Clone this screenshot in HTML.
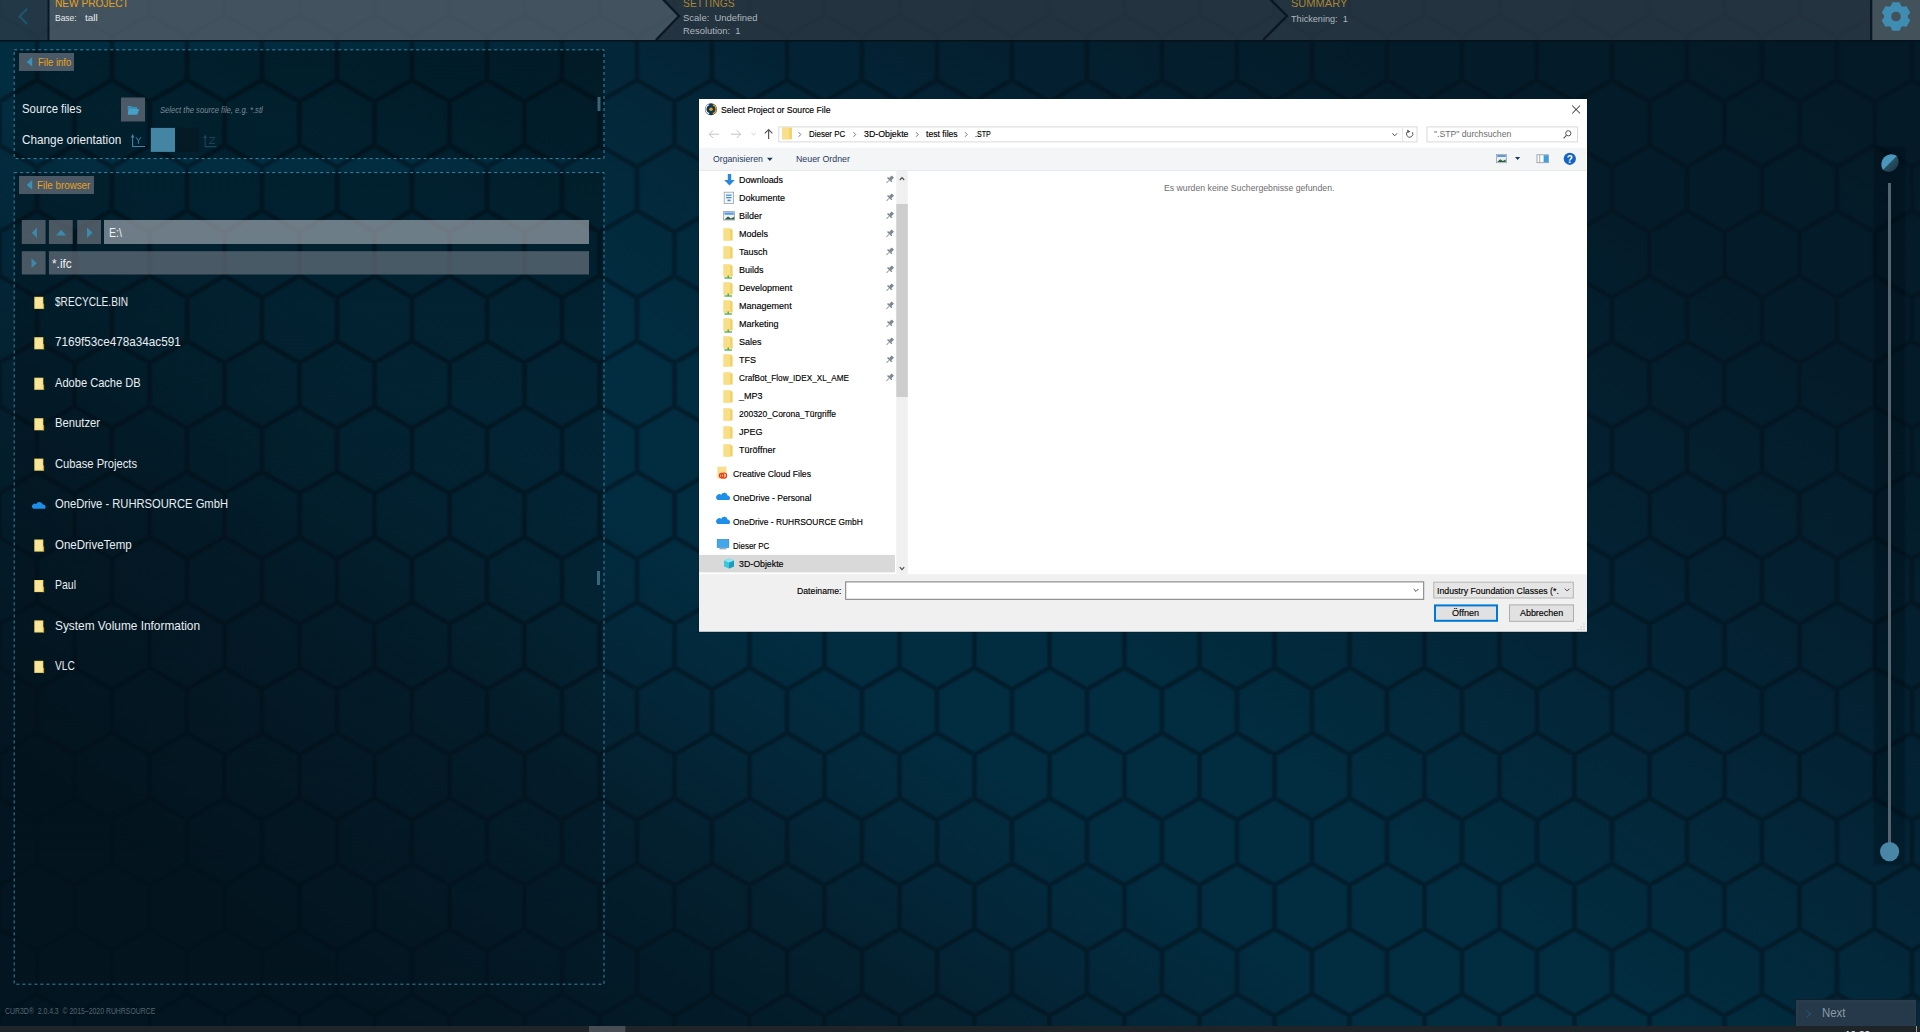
<!DOCTYPE html>
<html><head><meta charset="utf-8"><title>CUR3D</title>
<style>
html,body{margin:0;padding:0;width:1920px;height:1032px;overflow:hidden;background:#03202f;font-family:"Liberation Sans",sans-serif;}
.a{position:absolute;}
.t{position:absolute;white-space:pre;line-height:1.1172;transform-origin:0 0;}
svg{position:absolute;left:0;top:0;}
</style></head><body>
<svg width="1920" height="1032" viewBox="0 0 1920 1032">
<defs>
<linearGradient id="bgg" gradientUnits="userSpaceOnUse" x1="682.5" y1="1219.4" x2="1581.4" y2="-104.6">
<stop offset="0.0000" stop-color="rgb(3,21,32)"/>
<stop offset="0.0940" stop-color="rgb(3,26,39)"/>
<stop offset="0.1875" stop-color="rgb(4,31,46)"/>
<stop offset="0.2687" stop-color="rgb(3,39,57)"/>
<stop offset="0.3438" stop-color="rgb(2,44,64)"/>
<stop offset="0.4188" stop-color="rgb(2,45,65)"/>
<stop offset="0.4938" stop-color="rgb(2,42,61)"/>
<stop offset="0.5687" stop-color="rgb(3,39,57)"/>
<stop offset="0.6562" stop-color="rgb(3,34,51)"/>
<stop offset="0.7375" stop-color="rgb(4,31,47)"/>
<stop offset="0.8438" stop-color="rgb(4,28,42)"/>
<stop offset="1.0000" stop-color="rgb(4,26,39)"/>
</linearGradient>
<linearGradient id="pov" gradientUnits="userSpaceOnUse" x1="0" y1="50" x2="0" y2="984">
 <stop offset="0" stop-color="#000" stop-opacity="0.32"/>
 <stop offset="1" stop-color="#000" stop-opacity="0.03"/>
</linearGradient>
<pattern id="hex" patternUnits="userSpaceOnUse" width="75" height="130.6" x="-0.5" y="101.7">
 <path d="M0,-2V43.5L37.5,65.3V108.8L0,130.6M75,-2V43.5L37.5,65.3M37.5,108.8L75,130.6" fill="none" stroke="rgb(2,17,26)" stroke-opacity="0.14" stroke-width="7.5"/>
 <path d="M0,-2V43.5L37.5,65.3V108.8L0,130.6M75,-2V43.5L37.5,65.3M37.5,108.8L75,130.6" fill="none" stroke="rgb(2,17,26)" stroke-opacity="0.42" stroke-width="4.2"/>
</pattern>
<pattern id="hexh" patternUnits="userSpaceOnUse" width="75" height="130.6" x="-0.5" y="101.7">
 <path d="M0,-2V43.5L37.5,65.3V108.8L0,130.6M75,-2V43.5L37.5,65.3M37.5,108.8L75,130.6" fill="none" stroke="#000" stroke-opacity="0.035" stroke-width="4"/>
</pattern>
</defs>
<rect width="1920" height="1032" fill="url(#bgg)"/>
<rect width="1920" height="1032" fill="url(#hex)"/>
<rect x="0" y="0" width="1920" height="40" fill="#23333f"/>
<rect x="0" y="0" width="48" height="40" fill="#223846"/>
<polygon points="49,0 663.7,0 679,16 656,40 49,40" fill="#42535f"/>
<rect x="0" y="0" width="1920" height="40" fill="url(#hexh)"/>
<polyline points="656,-8 679,16 656,40" fill="none" stroke="#0b1822" stroke-width="2.4"/>
<polyline points="1263,-8 1287,16 1263,40" fill="none" stroke="#0b1822" stroke-width="2.4"/>
<rect x="47.5" y="0" width="2" height="40" fill="#0b1822"/>
<rect x="1870" y="0" width="2.4" height="40" fill="#0b1822"/>
<rect x="1872.4" y="0" width="47.6" height="40" fill="#43515b"/>
<rect x="0" y="40" width="1920" height="1.6" fill="#06131c"/>
<polyline points="27.2,8.7 19.6,16.4 27.2,24" fill="none" stroke="#1d5673" stroke-width="2"/>
<path d="M1901.00,5.70 L1899.70,2.17 L1892.30,2.17 L1891.00,5.70 A11.90,11.90 0 0 0 1889.15,6.77 L1885.44,6.13 L1881.74,12.54 L1884.15,15.43 A11.90,11.90 0 0 0 1884.15,17.57 L1881.74,20.46 L1885.44,26.87 L1889.15,26.23 A11.90,11.90 0 0 0 1891.00,27.30 L1892.30,30.83 L1899.70,30.83 L1901.00,27.30 A11.90,11.90 0 0 0 1902.85,26.23 L1906.56,26.87 L1910.26,20.46 L1907.85,17.57 A11.90,11.90 0 0 0 1907.85,15.43 L1910.26,12.54 L1906.56,6.13 L1902.85,6.77 A11.90,11.90 0 0 0 1901.00,5.70 Z M1891.15,16.50 a4.85,4.85 0 1 0 9.7,0 a4.85,4.85 0 1 0 -9.7,0 Z" fill="#3f8db3" fill-rule="evenodd"/>
<rect x="14" y="50" width="590" height="108.6" fill="url(#pov)"/>
<rect x="14" y="172.6" width="590" height="811.7" fill="url(#pov)"/>
<rect x="14.2" y="49.8" width="589.8" height="108.8" fill="none" stroke="#3a86a0" stroke-width="1" stroke-dasharray="3 3"/>
<rect x="14.2" y="172.6" width="589.8" height="811.6" fill="none" stroke="#3a86a0" stroke-width="1" stroke-dasharray="3 3"/>
<rect x="19" y="53" width="55" height="18" fill="#4a5965"/>
<polygon points="32.2,57 26.7,62 32.2,66.8" fill="#3c8fb5"/>
<rect x="19" y="176" width="75" height="18" fill="#4a5965"/>
<polygon points="32.2,180 26.7,185 32.2,189.8" fill="#3c8fb5"/>
<rect x="121" y="97.5" width="24" height="24" fill="#4b5a66"/>
<path d="M127.6,106 h3.8 l1,1 h4.6 v2 h-9.4 z" fill="#3a8fb8"/><path d="M128.4,109 h10.8 l-1.8,5.8 h-9.6 z" fill="#45a0ca"/>
<rect x="597.5" y="97" width="3" height="14" fill="#36667c"/>
<rect x="597" y="571" width="3" height="14" fill="#36667c"/>
<path d="M132.6,135.5 V146.5 H145" fill="none" stroke="#3d86a6" stroke-width="1.1"/><polygon points="130.8,137.5 132.6,134 134.4,137.5" fill="#3d86a6"/>
<path d="M135.9,137.2 L138.4,140.6 L140.9,137.2 M138.4,140.6 V143.8" fill="none" stroke="#3d86a6" stroke-width="1"/>
<rect x="150.8" y="127.9" width="24.2" height="24" fill="#4485a3"/>
<rect x="175" y="127.9" width="24" height="24" fill="#061822" fill-opacity="0.75"/>
<path d="M205.2,136 V146.6 H216.7" fill="none" stroke="#1d4656" stroke-width="1.1"/><polygon points="203.4,138 205.2,134.6 207,138" fill="#1d4656"/>
<path d="M209.2,137.4 H215 L209.2,143.6 H215" fill="none" stroke="#1d4656" stroke-width="1"/>
<rect x="21.8" y="220" width="23.8" height="24" fill="rgb(124,128,138)" fill-opacity="0.6"/>
<rect x="48.9" y="220" width="23.8" height="24" fill="rgb(124,128,138)" fill-opacity="0.6"/>
<rect x="77.2" y="220" width="23.8" height="24" fill="rgb(124,128,138)" fill-opacity="0.6"/>
<rect x="104" y="220" width="485" height="24" fill="rgb(182,187,195)" fill-opacity="0.6"/>
<rect x="21.8" y="251.2" width="23.8" height="23.3" fill="rgb(124,128,138)" fill-opacity="0.6"/>
<rect x="48.9" y="251.2" width="540.1" height="23.3" fill="rgb(122,128,140)" fill-opacity="0.6"/>
<polygon points="36.9,227.6 31.9,232.8 36.9,238" fill="#3c8aab"/>
<polygon points="56,235.5 61.1,229.8 66.2,235.5" fill="#3c8aab"/>
<polygon points="87,227.5 92.6,232.8 87,238" fill="#3c8aab"/>
<polygon points="31.5,258.5 36.9,263.2 31.5,267.9" fill="#3c8aab"/>
<rect x="34.3" y="296.8" width="9" height="12.1" fill="#f5dc6e"/><rect x="43.3" y="303.7" width="0.8" height="5.4" fill="#f0cc50"/><rect x="35.3" y="297.8" width="7" height="10" fill="#f9e59c"/>
<rect x="34.3" y="337.2" width="9" height="12.1" fill="#f5dc6e"/><rect x="43.3" y="344.1" width="0.8" height="5.4" fill="#f0cc50"/><rect x="35.3" y="338.2" width="7" height="10" fill="#f9e59c"/>
<rect x="34.3" y="377.7" width="9" height="12.1" fill="#f5dc6e"/><rect x="43.3" y="384.6" width="0.8" height="5.4" fill="#f0cc50"/><rect x="35.3" y="378.7" width="7" height="10" fill="#f9e59c"/>
<rect x="34.3" y="418.2" width="9" height="12.1" fill="#f5dc6e"/><rect x="43.3" y="425.1" width="0.8" height="5.4" fill="#f0cc50"/><rect x="35.3" y="419.2" width="7" height="10" fill="#f9e59c"/>
<rect x="34.3" y="458.6" width="9" height="12.1" fill="#f5dc6e"/><rect x="43.3" y="465.5" width="0.8" height="5.4" fill="#f0cc50"/><rect x="35.3" y="459.6" width="7" height="10" fill="#f9e59c"/>
<path d="M33.5,508.8 h11.5 a2.6,2.6 0 0 0 -2.2,-4.3 a3.6,3.6 0 0 0 -6.6,-0.6 a2.6,2.6 0 0 0 -2.7,4.9 z" fill="#1f8ee8"/>
<rect x="34.3" y="539.5" width="9" height="12.1" fill="#f5dc6e"/><rect x="43.3" y="546.4" width="0.8" height="5.4" fill="#f0cc50"/><rect x="35.3" y="540.5" width="7" height="10" fill="#f9e59c"/>
<rect x="34.3" y="580.0" width="9" height="12.1" fill="#f5dc6e"/><rect x="43.3" y="586.9" width="0.8" height="5.4" fill="#f0cc50"/><rect x="35.3" y="581.0" width="7" height="10" fill="#f9e59c"/>
<rect x="34.3" y="620.4" width="9" height="12.1" fill="#f5dc6e"/><rect x="43.3" y="627.3" width="0.8" height="5.4" fill="#f0cc50"/><rect x="35.3" y="621.4" width="7" height="10" fill="#f9e59c"/>
<rect x="34.3" y="660.8" width="9" height="12.1" fill="#f5dc6e"/><rect x="43.3" y="667.8" width="0.8" height="5.4" fill="#f0cc50"/><rect x="35.3" y="661.8" width="7" height="10" fill="#f9e59c"/>
<rect x="1873" y="146" width="33" height="720" fill="#000" fill-opacity="0.12"/><rect x="1875" y="148" width="29" height="716" fill="#000" fill-opacity="0.08"/>
<rect x="1888" y="183" width="3" height="662" fill="#56646d"/>
<circle cx="1889.6" cy="851.6" r="9.6" fill="#4a87a6"/>
<defs><linearGradient id="kdark" x1="0" y1="0" x2="1" y2="1"><stop offset="0.4" stop-color="#2c5468"/><stop offset="1" stop-color="#15303e"/></linearGradient></defs><path d="M1897,156 A10.1,10.1 0 0 1 1883,170 Z" fill="url(#kdark)"/><path d="M1883,170 A10.1,10.1 0 0 1 1897,156 Z" fill="#4b97bd"/>
<rect x="1795.5" y="999.5" width="121" height="27" fill="#25394a" stroke="#0f1f2b" stroke-width="1"/><rect x="1797" y="1001" width="118" height="26" fill="none" stroke="#2d4152" stroke-width="1"/>
<polyline points="1806.5,1010.5 1810.5,1014 1806.5,1017.5" fill="none" stroke="#215f7f" stroke-width="1"/>
<rect x="0" y="1026" width="1920" height="6" fill="#1f2428"/>
<rect x="589" y="1026" width="36.4" height="6" fill="#474d52"/>
<rect x="1916" y="1026" width="1" height="6" fill="#9aa0a4"/>
<text x="1845" y="1038.5" font-family="Liberation Sans" font-size="10" fill="#f0f0f0">19:38</text>
<rect x="698" y="99" width="890" height="534" fill="#000" fill-opacity="0.12"/>
<rect x="699" y="99" width="888" height="532.5" fill="#ffffff"/>
<circle cx="711" cy="109.2" r="6" fill="#0f3a57"/><path d="M709.2,104.8 a4.6,4.6 0 0 0 0,8.8" fill="none" stroke="#ffffff" stroke-width="1.1"/><path d="M712.8,104.8 a4.6,4.6 0 0 1 0,8.8" fill="none" stroke="#f0a21c" stroke-width="1.3"/><circle cx="711" cy="109.2" r="1.8" fill="#e6a21c"/>
<path d="M1572.2,105.6 L1580,113.4 M1580,105.6 L1572.2,113.4" stroke="#1a1a1a" stroke-width="1"/>
<path d="M709.5,134.2 H719 M713,130.4 L709.3,134.2 L713,138" fill="none" stroke="#c4c4c4" stroke-width="1"/>
<path d="M731,134.2 H740.5 M736.8,130.4 L740.5,134.2 L736.8,138" fill="none" stroke="#c4c4c4" stroke-width="1"/>
<path d="M751.5,133 L753.6,135 L755.7,133" fill="none" stroke="#d0d0d0" stroke-width="1"/>
<path d="M768.6,139 V129.8 M764.8,133.4 L768.6,129.6 L772.4,133.4" fill="none" stroke="#5a5a5a" stroke-width="1.2"/>
<rect x="778.8" y="126.9" width="638.2" height="15" fill="#fff" stroke="#d9d9d9" stroke-width="1"/>
<rect x="782" y="127.6" width="10" height="11.7" fill="#f4d36f"/><rect x="782" y="127.6" width="7" height="11.7" fill="#f8df8c"/>
<path d="M798.6,132.2 L800.8,134.5 L798.6,136.8" fill="none" stroke="#6a6a6a" stroke-width="0.9"/>
<path d="M853.5,132.2 L855.7,134.5 L853.5,136.8" fill="none" stroke="#6a6a6a" stroke-width="0.9"/>
<path d="M916.0,132.2 L918.2,134.5 L916.0,136.8" fill="none" stroke="#6a6a6a" stroke-width="0.9"/>
<path d="M965.0,132.2 L967.2,134.5 L965.0,136.8" fill="none" stroke="#6a6a6a" stroke-width="0.9"/>
<path d="M1392.4,133.4 L1394.7,135.8 L1397,133.4" fill="none" stroke="#4a4a4a" stroke-width="1"/>
<rect x="1402" y="127.4" width="1" height="14" fill="#e6e6e6"/>
<path d="M1412.3,132.2 A3.2,3.2 0 1 1 1408.2,131.2" fill="none" stroke="#5a5a5a" stroke-width="1"/><polygon points="1407.2,129.4 1410.4,131.4 1407.4,133.2" fill="#5a5a5a"/>
<rect x="1427" y="126.9" width="150.5" height="15" fill="#fff" stroke="#d9d9d9" stroke-width="1"/>
<circle cx="1568.3" cy="133.3" r="2.6" fill="none" stroke="#555" stroke-width="1"/><path d="M1566.4,135.3 L1563.6,138.3" stroke="#555" stroke-width="1.1"/>
<rect x="699" y="147.8" width="887" height="22.7" fill="#f4f5f7"/>
<rect x="699" y="170" width="887" height="1" fill="#e8e9eb"/>
<polygon points="767,157.8 772.7,157.8 769.85,161" fill="#1e395b"/>
<rect x="1496.5" y="154.4" width="10" height="8.3" fill="#e8eef4" stroke="#9aa4ae" stroke-width="0.8"/><path d="M1497.3,161.9 l3,-2.6 l2.4,1.6 l3,-1.4 v2.4 z" fill="#2f5f3a"/><rect x="1497.2" y="155.2" width="8.6" height="1.6" fill="#3a86d8"/>
<polygon points="1515,157 1520.2,157 1517.6,160" fill="#1e395b"/>
<rect x="1537" y="154.8" width="11.5" height="7.9" fill="#fff" stroke="#8a949e" stroke-width="0.8"/><rect x="1543.6" y="155.2" width="4.5" height="7.1" fill="#3a9ee0"/><rect x="1539.4" y="155.2" width="0.8" height="7.1" fill="#8a949e"/>
<circle cx="1569.8" cy="158.8" r="6.1" fill="#1263c4"/><text x="1569.8" y="162.6" font-family="Liberation Sans" font-weight="bold" font-size="10" fill="#fff" text-anchor="middle">?</text>
<rect x="699" y="554.9" width="196" height="17.5" fill="#d9d9d9"/>
<rect x="896.3" y="171" width="11.5" height="403" fill="#f0f0f0"/>
<rect x="896.3" y="204" width="11.5" height="193" fill="#cdcdcd"/>
<path d="M899.8,180 L902,177.6 L904.2,180" fill="none" stroke="#505050" stroke-width="1.2"/>
<path d="M899.8,567.2 L902,569.6 L904.2,567.2" fill="none" stroke="#505050" stroke-width="1.2"/>
<path d="M727.8,174 h3.4 v6 h3.6 l-5.3,5.6 l-5.3,-5.6 h3.6 z" fill="#2a87df"/>
<g transform="translate(889.6,179.8) rotate(45)"><rect x="-1.6" y="-4.6" width="3.2" height="4" fill="#7a8894"/><rect x="-3" y="-0.8" width="6" height="1.4" fill="#7a8894"/><rect x="-0.45" y="0.6" width="0.9" height="3.8" fill="#8d99a3"/></g>
<rect x="724.2" y="192.2" width="9.4" height="11.2" fill="#f4f6f8" stroke="#9aa0a6" stroke-width="0.8"/><rect x="726" y="194.6" width="5.6" height="1.2" fill="#3b8ad8"/><rect x="726" y="197" width="5.6" height="1.2" fill="#3b8ad8"/><rect x="727.5" y="199.6" width="3" height="1.6" fill="#3b8ad8"/>
<g transform="translate(889.6,197.8) rotate(45)"><rect x="-1.6" y="-4.6" width="3.2" height="4" fill="#7a8894"/><rect x="-3" y="-0.8" width="6" height="1.4" fill="#7a8894"/><rect x="-0.45" y="0.6" width="0.9" height="3.8" fill="#8d99a3"/></g>
<rect x="723.6" y="211.6" width="11" height="8.4" fill="#eef2f6" stroke="#9aa0a6" stroke-width="0.8"/><path d="M724.4,219.4 l3.6,-3 l3,2 l3.2,-1.6 v2.6 z" fill="#2d5c3c"/><rect x="724.4" y="212.4" width="9.4" height="2.4" fill="#5aa0e0"/>
<g transform="translate(889.6,215.8) rotate(45)"><rect x="-1.6" y="-4.6" width="3.2" height="4" fill="#7a8894"/><rect x="-3" y="-0.8" width="6" height="1.4" fill="#7a8894"/><rect x="-0.45" y="0.6" width="0.9" height="3.8" fill="#8d99a3"/></g>
<path d="M723.6,228.6 h7 l2,1.4 v10.6 h-9 z" fill="#f2cf63"/><rect x="723.6" y="228.6" width="6.6" height="12" fill="#f9de88"/>
<g transform="translate(889.6,233.8) rotate(45)"><rect x="-1.6" y="-4.6" width="3.2" height="4" fill="#7a8894"/><rect x="-3" y="-0.8" width="6" height="1.4" fill="#7a8894"/><rect x="-0.45" y="0.6" width="0.9" height="3.8" fill="#8d99a3"/></g>
<path d="M723.6,246.6 h7 l2,1.4 v10.6 h-9 z" fill="#f2cf63"/><rect x="723.6" y="246.6" width="6.6" height="12" fill="#f9de88"/>
<g transform="translate(889.6,251.8) rotate(45)"><rect x="-1.6" y="-4.6" width="3.2" height="4" fill="#7a8894"/><rect x="-3" y="-0.8" width="6" height="1.4" fill="#7a8894"/><rect x="-0.45" y="0.6" width="0.9" height="3.8" fill="#8d99a3"/></g>
<path d="M723.6,264.6 h7 l2,1.4 v10.6 h-9 z" fill="#f2cf63"/><rect x="723.6" y="264.6" width="6.6" height="12" fill="#f9de88"/>
<rect x="727.6" y="275.4" width="1.2" height="2.6" fill="#3aa43a"/><rect x="724.4" y="277.4" width="7.6" height="1.2" fill="#3aa43a"/>
<g transform="translate(889.6,269.8) rotate(45)"><rect x="-1.6" y="-4.6" width="3.2" height="4" fill="#7a8894"/><rect x="-3" y="-0.8" width="6" height="1.4" fill="#7a8894"/><rect x="-0.45" y="0.6" width="0.9" height="3.8" fill="#8d99a3"/></g>
<path d="M723.6,282.6 h7 l2,1.4 v10.6 h-9 z" fill="#f2cf63"/><rect x="723.6" y="282.6" width="6.6" height="12" fill="#f9de88"/>
<rect x="727.6" y="293.4" width="1.2" height="2.6" fill="#3aa43a"/><rect x="724.4" y="295.4" width="7.6" height="1.2" fill="#3aa43a"/>
<g transform="translate(889.6,287.8) rotate(45)"><rect x="-1.6" y="-4.6" width="3.2" height="4" fill="#7a8894"/><rect x="-3" y="-0.8" width="6" height="1.4" fill="#7a8894"/><rect x="-0.45" y="0.6" width="0.9" height="3.8" fill="#8d99a3"/></g>
<path d="M723.6,300.6 h7 l2,1.4 v10.6 h-9 z" fill="#f2cf63"/><rect x="723.6" y="300.6" width="6.6" height="12" fill="#f9de88"/>
<rect x="727.6" y="311.4" width="1.2" height="2.6" fill="#3aa43a"/><rect x="724.4" y="313.4" width="7.6" height="1.2" fill="#3aa43a"/>
<g transform="translate(889.6,305.8) rotate(45)"><rect x="-1.6" y="-4.6" width="3.2" height="4" fill="#7a8894"/><rect x="-3" y="-0.8" width="6" height="1.4" fill="#7a8894"/><rect x="-0.45" y="0.6" width="0.9" height="3.8" fill="#8d99a3"/></g>
<path d="M723.6,318.6 h7 l2,1.4 v10.6 h-9 z" fill="#f2cf63"/><rect x="723.6" y="318.6" width="6.6" height="12" fill="#f9de88"/>
<rect x="727.6" y="329.4" width="1.2" height="2.6" fill="#3aa43a"/><rect x="724.4" y="331.4" width="7.6" height="1.2" fill="#3aa43a"/>
<g transform="translate(889.6,323.8) rotate(45)"><rect x="-1.6" y="-4.6" width="3.2" height="4" fill="#7a8894"/><rect x="-3" y="-0.8" width="6" height="1.4" fill="#7a8894"/><rect x="-0.45" y="0.6" width="0.9" height="3.8" fill="#8d99a3"/></g>
<path d="M723.6,336.6 h7 l2,1.4 v10.6 h-9 z" fill="#f2cf63"/><rect x="723.6" y="336.6" width="6.6" height="12" fill="#f9de88"/>
<rect x="727.6" y="347.4" width="1.2" height="2.6" fill="#3aa43a"/><rect x="724.4" y="349.4" width="7.6" height="1.2" fill="#3aa43a"/>
<g transform="translate(889.6,341.8) rotate(45)"><rect x="-1.6" y="-4.6" width="3.2" height="4" fill="#7a8894"/><rect x="-3" y="-0.8" width="6" height="1.4" fill="#7a8894"/><rect x="-0.45" y="0.6" width="0.9" height="3.8" fill="#8d99a3"/></g>
<path d="M723.6,354.6 h7 l2,1.4 v10.6 h-9 z" fill="#f2cf63"/><rect x="723.6" y="354.6" width="6.6" height="12" fill="#f9de88"/>
<g transform="translate(889.6,359.8) rotate(45)"><rect x="-1.6" y="-4.6" width="3.2" height="4" fill="#7a8894"/><rect x="-3" y="-0.8" width="6" height="1.4" fill="#7a8894"/><rect x="-0.45" y="0.6" width="0.9" height="3.8" fill="#8d99a3"/></g>
<path d="M723.6,372.6 h7 l2,1.4 v10.6 h-9 z" fill="#f2cf63"/><rect x="723.6" y="372.6" width="6.6" height="12" fill="#f9de88"/>
<g transform="translate(889.6,377.8) rotate(45)"><rect x="-1.6" y="-4.6" width="3.2" height="4" fill="#7a8894"/><rect x="-3" y="-0.8" width="6" height="1.4" fill="#7a8894"/><rect x="-0.45" y="0.6" width="0.9" height="3.8" fill="#8d99a3"/></g>
<path d="M723.6,390.6 h7 l2,1.4 v10.6 h-9 z" fill="#f2cf63"/><rect x="723.6" y="390.6" width="6.6" height="12" fill="#f9de88"/>
<path d="M723.6,408.6 h7 l2,1.4 v10.6 h-9 z" fill="#f2cf63"/><rect x="723.6" y="408.6" width="6.6" height="12" fill="#f9de88"/>
<path d="M723.6,426.6 h7 l2,1.4 v10.6 h-9 z" fill="#f2cf63"/><rect x="723.6" y="426.6" width="6.6" height="12" fill="#f9de88"/>
<path d="M723.6,444.6 h7 l2,1.4 v10.6 h-9 z" fill="#f2cf63"/><rect x="723.6" y="444.6" width="6.6" height="12" fill="#f9de88"/>
<rect x="717.4" y="466.6" width="9" height="12" fill="#f8df8c"/><circle cx="724" cy="475.6" r="2.6" fill="none" stroke="#e23a1e" stroke-width="1.2"/><circle cx="721.6" cy="475.6" r="2.2" fill="none" stroke="#e23a1e" stroke-width="1.2"/>
<path d="M717.6,500.0 h11.6 a2.5,2.5 0 0 0 -1.6,-4.4 a3.4,3.4 0 0 0 -6.4,-0.9 a2.6,2.6 0 0 0 -3.6,5.3 z" fill="#1f8ee8"/>
<path d="M717.6,524.0 h11.6 a2.5,2.5 0 0 0 -1.6,-4.4 a3.4,3.4 0 0 0 -6.4,-0.9 a2.6,2.6 0 0 0 -3.6,5.3 z" fill="#1f8ee8"/>
<rect x="717.2" y="539.4" width="11.6" height="8" fill="#43a8ea" stroke="#2a7fc0" stroke-width="0.6"/><rect x="719.5" y="548" width="7" height="1.4" fill="#9ab0c0"/>
<path d="M724,560.4 l5,-2 l5,2 v6 l-5,2.2 l-5,-2.2 z" fill="#3fc6dc"/><path d="M729,562.6 l5,-2.2 v6 l-5,2.2 z" fill="#1a9cc0"/><path d="M724,560.4 l5,-2 l5,2 l-5,2.2 z" fill="#8ae6f2"/>
<rect x="699" y="574.2" width="888" height="57.3" fill="#f0f0f0"/>
<rect x="845.7" y="581.9" width="578" height="17.4" fill="#fff" stroke="#7a7a7a" stroke-width="1"/>
<path d="M1413.6,589 L1416,591.4 L1418.4,589" fill="none" stroke="#4a4a4a" stroke-width="1"/>
<rect x="1433.8" y="582.2" width="139.5" height="15.8" fill="#e5e5e5" stroke="#b5b5b5" stroke-width="1"/>
<path d="M1564.8,588.6 L1567.2,591 L1569.6,588.6" fill="none" stroke="#4a4a4a" stroke-width="1"/>
<rect x="1435" y="605.4" width="62" height="15.4" fill="#e1e1e1" stroke="#0078d7" stroke-width="2"/>
<rect x="1509.5" y="604.9" width="64" height="16.4" fill="#e1e1e1" stroke="#adadad" stroke-width="1"/>
<rect x="1583.5" y="623.5" width="1" height="1" fill="#b0b0b0"/>
<rect x="1583.5" y="626.5" width="1" height="1" fill="#b0b0b0"/>
<rect x="1580.5" y="626.5" width="1" height="1" fill="#b0b0b0"/>
<rect x="1583.5" y="629.0" width="1" height="1" fill="#b0b0b0"/>
<rect x="1580.5" y="629.0" width="1" height="1" fill="#b0b0b0"/>
<rect x="1577.5" y="629.0" width="1" height="1" fill="#b0b0b0"/>
</svg>
<div id="t0" class="t" style="left:54.50px;top:-2.43px;font-size:10.20px;color:#e9a21a;transform:scaleX(0.9938);">NEW PROJECT</div>
<div id="t1" class="t" style="left:54.50px;top:13.43px;font-size:9.80px;color:#e6ecef;transform:scaleX(0.8658);">Base:</div>
<div id="t2" class="t" style="left:84.60px;top:13.43px;font-size:9.80px;color:#e6ecef;transform:scaleX(1.0214);">tall</div>
<div id="t3" class="t" style="left:682.70px;top:-2.42px;font-size:10.40px;color:#a98532;transform:scaleX(0.9929);">SETTINGS</div>
<div id="t4" class="t" style="left:682.70px;top:13.43px;font-size:9.80px;color:#aeb8bf;transform:scaleX(0.9645);">Scale:  Undefined</div>
<div id="t5" class="t" style="left:682.70px;top:25.53px;font-size:9.80px;color:#aeb8bf;transform:scaleX(0.9598);">Resolution:  1</div>
<div id="t6" class="t" style="left:1290.60px;top:-2.78px;font-size:10.80px;color:#a98532;transform:scaleX(1.0236);">SUMMARY</div>
<div id="t7" class="t" style="left:1290.60px;top:13.63px;font-size:9.80px;color:#aeb8bf;transform:scaleX(0.9295);">Thickening:  1</div>
<div id="t8" class="t" style="left:37.60px;top:57.17px;font-size:10.20px;color:#e9a21a;transform:scaleX(0.9335);">File info</div>
<div id="t9" class="t" style="left:22.10px;top:102.23px;font-size:13.00px;color:#e8eef2;transform:scaleX(0.8731);">Source files</div>
<div id="t10" class="t" style="left:159.60px;top:105.25px;font-size:9.00px;color:#7d8a94;font-style:italic;transform:scaleX(0.8483);">Select the source file, e.g. *.stl</div>
<div id="t11" class="t" style="left:21.70px;top:133.23px;font-size:13.00px;color:#e8eef2;transform:scaleX(0.9039);">Change orientation</div>
<div id="t12" class="t" style="left:37.30px;top:179.97px;font-size:10.20px;color:#e9a21a;transform:scaleX(0.9606);">File browser</div>
<div id="t13" class="t" style="left:109.10px;top:226.96px;font-size:12.20px;color:#eef2f4;transform:scaleX(0.8587);">E:\</div>
<div id="t14" class="t" style="left:52.00px;top:257.76px;font-size:12.20px;color:#eef2f4;transform:scaleX(0.9691);">*.ifc</div>
<div id="t15" class="t" style="left:54.80px;top:295.96px;font-size:12.20px;color:#e8eef2;transform:scaleX(0.8290);">$RECYCLE.BIN</div>
<div id="t16" class="t" style="left:54.80px;top:336.41px;font-size:12.20px;color:#e8eef2;transform:scaleX(0.9609);">7169f53ce478a34ac591</div>
<div id="t17" class="t" style="left:54.80px;top:376.86px;font-size:12.20px;color:#e8eef2;transform:scaleX(0.9099);">Adobe Cache DB</div>
<div id="t18" class="t" style="left:54.80px;top:417.31px;font-size:12.20px;color:#e8eef2;transform:scaleX(0.9225);">Benutzer</div>
<div id="t19" class="t" style="left:54.80px;top:457.76px;font-size:12.20px;color:#e8eef2;transform:scaleX(0.9170);">Cubase Projects</div>
<div id="t20" class="t" style="left:54.80px;top:498.21px;font-size:12.20px;color:#e8eef2;transform:scaleX(0.9189);">OneDrive - RUHRSOURCE GmbH</div>
<div id="t21" class="t" style="left:54.80px;top:538.66px;font-size:12.20px;color:#e8eef2;transform:scaleX(0.9436);">OneDriveTemp</div>
<div id="t22" class="t" style="left:54.80px;top:579.11px;font-size:12.20px;color:#e8eef2;transform:scaleX(0.8604);">Paul</div>
<div id="t23" class="t" style="left:54.80px;top:619.56px;font-size:12.20px;color:#e8eef2;transform:scaleX(0.9730);">System Volume Information</div>
<div id="t24" class="t" style="left:54.80px;top:660.01px;font-size:12.20px;color:#e8eef2;transform:scaleX(0.8306);">VLC</div>
<div id="t25" class="t" style="left:4.70px;top:1007.38px;font-size:8.20px;color:#56656f;transform:scaleX(0.8414);">CUR3D®  2.0.4.3  © 2015–2020 RUHRSOURCE</div>
<div id="t26" class="t" style="left:1821.60px;top:1007.46px;font-size:12.20px;color:#8a9ba6;transform:scaleX(0.9337);">Next</div>
<div id="t27" class="t" style="left:720.60px;top:105.11px;font-size:9.60px;color:#000000;-webkit-text-stroke:0.15px #000;transform:scaleX(0.9007);">Select Project or Source File</div>
<div id="t28" class="t" style="left:809.00px;top:129.38px;font-size:9.30px;color:#000000;-webkit-text-stroke:0.15px #000;transform:scaleX(0.8566);">Dieser PC</div>
<div id="t29" class="t" style="left:863.50px;top:129.38px;font-size:9.30px;color:#000000;-webkit-text-stroke:0.15px #000;transform:scaleX(0.9462);">3D-Objekte</div>
<div id="t30" class="t" style="left:925.60px;top:129.38px;font-size:9.30px;color:#000000;-webkit-text-stroke:0.15px #000;transform:scaleX(0.9294);">test files</div>
<div id="t31" class="t" style="left:975.00px;top:129.38px;font-size:9.30px;color:#000000;-webkit-text-stroke:0.15px #000;transform:scaleX(0.7595);">.STP</div>
<div id="t32" class="t" style="left:1433.80px;top:129.38px;font-size:9.30px;color:#6d6d6d;transform:scaleX(0.9303);">".STP" durchsuchen</div>
<div id="t33" class="t" style="left:712.60px;top:154.18px;font-size:9.30px;color:#1e395b;transform:scaleX(0.9374);">Organisieren</div>
<div id="t34" class="t" style="left:795.90px;top:154.18px;font-size:9.30px;color:#1e395b;transform:scaleX(0.9482);">Neuer Ordner</div>
<div id="t35" class="t" style="left:1164.10px;top:183.38px;font-size:9.30px;color:#6d6d6d;transform:scaleX(0.9366);">Es wurden keine Suchergebnisse gefunden.</div>
<div id="t36" class="t" style="left:738.90px;top:174.98px;font-size:9.30px;color:#000000;-webkit-text-stroke:0.15px #000;transform:scaleX(0.9565);">Downloads</div>
<div id="t37" class="t" style="left:738.90px;top:192.98px;font-size:9.30px;color:#000000;-webkit-text-stroke:0.15px #000;transform:scaleX(0.9700);">Dokumente</div>
<div id="t38" class="t" style="left:738.90px;top:210.98px;font-size:9.30px;color:#000000;-webkit-text-stroke:0.15px #000;transform:scaleX(0.9700);">Bilder</div>
<div id="t39" class="t" style="left:738.90px;top:228.98px;font-size:9.30px;color:#000000;-webkit-text-stroke:0.15px #000;transform:scaleX(0.9700);">Models</div>
<div id="t40" class="t" style="left:738.90px;top:246.98px;font-size:9.30px;color:#000000;-webkit-text-stroke:0.15px #000;transform:scaleX(0.9700);">Tausch</div>
<div id="t41" class="t" style="left:738.90px;top:264.98px;font-size:9.30px;color:#000000;-webkit-text-stroke:0.15px #000;transform:scaleX(0.9700);">Builds</div>
<div id="t42" class="t" style="left:738.90px;top:282.98px;font-size:9.30px;color:#000000;-webkit-text-stroke:0.15px #000;transform:scaleX(0.9700);">Development</div>
<div id="t43" class="t" style="left:738.90px;top:300.98px;font-size:9.30px;color:#000000;-webkit-text-stroke:0.15px #000;transform:scaleX(0.9700);">Management</div>
<div id="t44" class="t" style="left:738.90px;top:318.98px;font-size:9.30px;color:#000000;-webkit-text-stroke:0.15px #000;transform:scaleX(0.9700);">Marketing</div>
<div id="t45" class="t" style="left:738.90px;top:336.98px;font-size:9.30px;color:#000000;-webkit-text-stroke:0.15px #000;transform:scaleX(0.9700);">Sales</div>
<div id="t46" class="t" style="left:738.90px;top:354.98px;font-size:9.30px;color:#000000;-webkit-text-stroke:0.15px #000;transform:scaleX(0.9700);">TFS</div>
<div id="t47" class="t" style="left:738.90px;top:372.98px;font-size:9.30px;color:#000000;-webkit-text-stroke:0.15px #000;transform:scaleX(0.8797);">CrafBot_Flow_IDEX_XL_AME</div>
<div id="t48" class="t" style="left:738.90px;top:390.98px;font-size:9.30px;color:#000000;-webkit-text-stroke:0.15px #000;transform:scaleX(0.9700);">_MP3</div>
<div id="t49" class="t" style="left:738.90px;top:408.98px;font-size:9.30px;color:#000000;-webkit-text-stroke:0.15px #000;transform:scaleX(0.9124);">200320_Corona_Türgriffe</div>
<div id="t50" class="t" style="left:738.90px;top:426.98px;font-size:9.30px;color:#000000;-webkit-text-stroke:0.15px #000;transform:scaleX(0.9700);">JPEG</div>
<div id="t51" class="t" style="left:738.90px;top:444.98px;font-size:9.30px;color:#000000;-webkit-text-stroke:0.15px #000;transform:scaleX(0.9700);">Türöffner</div>
<div id="t52" class="t" style="left:732.80px;top:468.88px;font-size:9.30px;color:#000000;-webkit-text-stroke:0.15px #000;transform:scaleX(0.9317);">Creative Cloud Files</div>
<div id="t53" class="t" style="left:732.80px;top:493.08px;font-size:9.30px;color:#000000;-webkit-text-stroke:0.15px #000;transform:scaleX(0.9307);">OneDrive - Personal</div>
<div id="t54" class="t" style="left:732.80px;top:516.98px;font-size:9.30px;color:#000000;-webkit-text-stroke:0.15px #000;transform:scaleX(0.9038);">OneDrive - RUHRSOURCE GmbH</div>
<div id="t55" class="t" style="left:732.80px;top:540.98px;font-size:9.30px;color:#000000;-webkit-text-stroke:0.15px #000;transform:scaleX(0.8566);">Dieser PC</div>
<div id="t56" class="t" style="left:738.90px;top:558.88px;font-size:9.30px;color:#000000;-webkit-text-stroke:0.15px #000;transform:scaleX(0.9462);">3D-Objekte</div>
<div id="t57" class="t" style="left:796.80px;top:586.38px;font-size:9.30px;color:#000000;-webkit-text-stroke:0.15px #000;transform:scaleX(0.9359);">Dateiname:</div>
<div id="t58" class="t" style="left:1436.50px;top:585.78px;font-size:9.30px;color:#000000;-webkit-text-stroke:0.15px #000;transform:scaleX(0.9391);">Industry Foundation Classes (*.</div>
<div id="t59" class="t" style="left:1452.00px;top:608.38px;font-size:9.30px;color:#000000;-webkit-text-stroke:0.15px #000;transform:scaleX(0.9730);">Öffnen</div>
<div id="t60" class="t" style="left:1519.60px;top:608.38px;font-size:9.30px;color:#000000;-webkit-text-stroke:0.15px #000;transform:scaleX(0.9584);">Abbrechen</div>
</body></html>
